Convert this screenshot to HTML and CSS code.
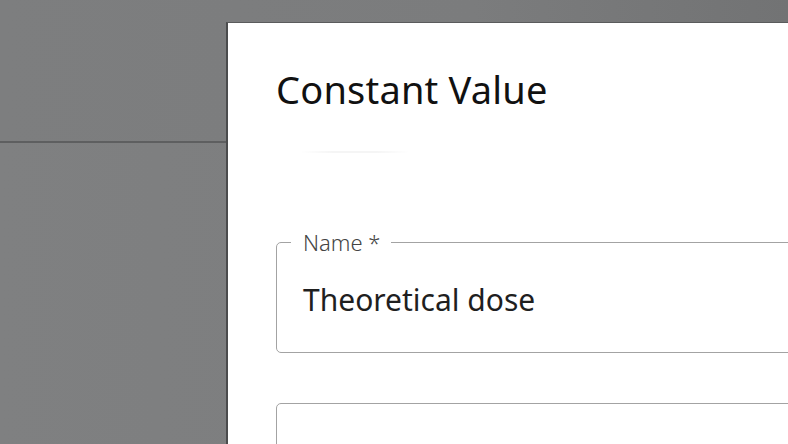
FILE: index.html
```html
<!DOCTYPE html>
<html>
<head>
<meta charset="utf-8">
<link rel="stylesheet" href="styles.css">
</head>
<body>
<div class="backdrop">
  <div class="band-top"></div>
  <div class="band-bottom"></div>
</div>
<div class="dialog">
  <h1 class="title">Constant Value</h1>
  <div class="tabline"></div>
  <fieldset class="field">
    <legend class="label">Name *</legend>
    <div class="value">Theoretical dose</div>
  </fieldset>
  <fieldset class="field field-empty"></fieldset>
</div>
</body>
</html>
```
FILE: styles.css
```css
html, body {
  margin: 0;
  padding: 0;
  width: 788px;
  height: 444px;
  overflow: hidden;
  font-family: "Noto Sans", "Open Sans", sans-serif;
}
.backdrop {
  display: flex;
  flex-direction: column;
  height: 444px;
  background: linear-gradient(90deg, #7c7d7e 0%, #7a7b7c 70%, #6f7071 100%);
}
.band-top {
  height: 141px;
  border-bottom: 2px solid #5e5f60;
  background: linear-gradient(90deg, #7d7e7f 0%, #7b7c7d 60%, #727374 100%);
}
.band-bottom {
  flex: 1;
  background: linear-gradient(90deg, #7f8081 0%, #7c7d7e 60%, #727374 100%);
}
.dialog {
  position: absolute;
  left: 226px;
  top: 22px;
  width: 562px;
  height: 422px;
  overflow: hidden;
  background: #ffffff;
  border-left: 2px solid #4b4c4d;
  border-top: 1px solid #5a5b5c;
  box-sizing: border-box;
  padding: 41px 0 0 48px;
}
.title {
  margin: 0;
  font-weight: 400;
  font-size: 38px;
  line-height: 50px;
  color: #111;
  letter-spacing: 0.2px;
}
.tabline {
  margin: 37px 0 0 24px;
  width: 110px;
  height: 2px;
  background: linear-gradient(90deg, rgba(0,0,0,0) 0%, rgba(0,0,0,0.04) 30%, rgba(0,0,0,0.04) 70%, rgba(0,0,0,0) 100%);
}
.field {
  margin: 78px 0 0 0;
  padding: 0 0 0 26px;
  width: 620px;
  height: 122px;
  box-sizing: border-box;
  border: 1.5px solid #a3a3a3;
  border-radius: 5px;
}
.label {
  margin-left: -12px;
  padding: 0 11px 0 12px;
  font-size: 22px;
  line-height: 22px;
  color: #444;
  font-weight: 300;
}
.value {
  margin-top: 28px;
  font-size: 30px;
  line-height: 38px;
  color: #1f1f1f;
}
.field-empty {
  margin-top: 50px;
  padding: 0;
}
```
